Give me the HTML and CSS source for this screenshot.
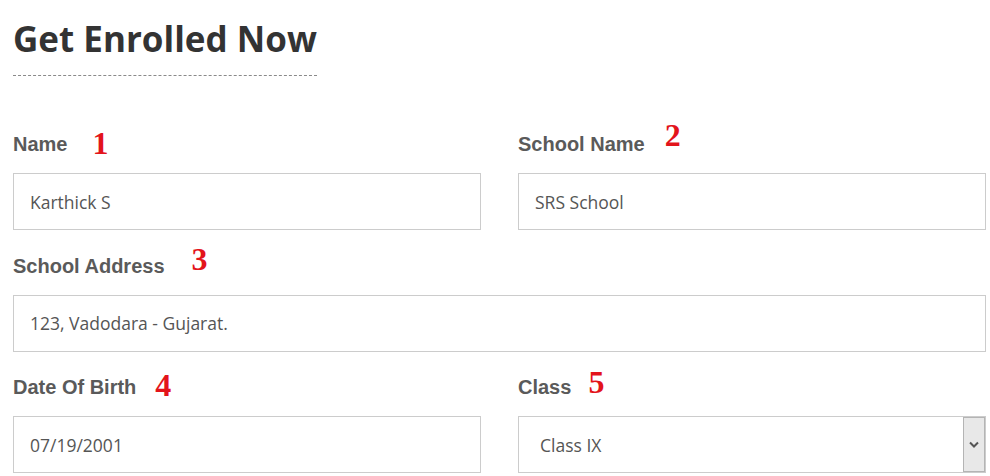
FILE: index.html
```html
<!DOCTYPE html>
<html lang="en">
<head>
<meta charset="utf-8">
<title>Get Enrolled Now</title>
<link rel="stylesheet" href="styles.css">
</head>
<body>
<div class="page">
  <h2 class="title">Get Enrolled Now</h2>
  <form class="form">
    <div class="field">
      <label class="label">Name<span class="num n1">1</span></label>
      <input class="input" type="text" value="Karthick S">
    </div>
    <div class="field">
      <label class="label">School Name<span class="num n2">2</span></label>
      <input class="input" type="text" value="SRS School">
    </div>
    <div class="field wide">
      <label class="label">School Address<span class="num n3">3</span></label>
      <input class="input" type="text" value="123, Vadodara - Gujarat.">
    </div>
    <div class="field">
      <label class="label">Date Of Birth<span class="num n4">4</span></label>
      <input class="input" type="text" value="07/19/2001">
    </div>
    <div class="field">
      <label class="label">Class<span class="num n5">5</span></label>
      <div class="select">
        <select class="select-box">
          <option>Class IX</option>
        </select>
        <span class="select-arrow">
          <svg width="10" height="7" viewBox="0 0 10 7"><path d="M1 1.5 L5 5.5 L9 1.5" fill="none" stroke="#555" stroke-width="2"/></svg>
        </span>
      </div>
    </div>
  </form>
</div>
</body>
</html>
```

FILE: styles.css
```css
html, body {
  margin: 0;
  padding: 0;
  background: #fff;
}
.page {
  padding: 0 4px 0 13px;
}
.title {
  display: inline-block;
  margin: 15px 0 0 0;
  padding-bottom: 12px;
  border-bottom: 1px dashed #8a8a8a;
  font-family: "Open Sans", sans-serif;
  font-weight: 700;
  font-size: 35px;
  line-height: 48px;
  color: #333;
}
.form {
  display: grid;
  grid-template-columns: 1fr 1fr;
  column-gap: 37px;
  margin-top: 56px;
}
.field.wide {
  grid-column: 1 / 3;
}
.label {
  display: block;
  height: 24px;
  line-height: 24px;
  font-family: "Liberation Sans", Arial, sans-serif;
  font-weight: 700;
  font-size: 20px;
  color: #5a5a5a;
  margin-bottom: 17px;
}
.num {
  font-family: "Liberation Serif", "Times New Roman", serif;
  font-weight: 700;
  font-size: 32px;
  line-height: 0;
  color: #e3141b;
}
.n1 { margin-left: 25px; vertical-align: -3px; }
.n2 { margin-left: 20px; vertical-align: 5px; }
.n3 { margin-left: 27px; vertical-align: 3px; }
.n4 { margin-left: 19px; vertical-align: -2px; }
.n5 { margin-left: 17px; vertical-align: 1px; }
.input {
  display: block;
  box-sizing: border-box;
  width: 100%;
  height: 57px;
  margin: 0 0 23.5px 0;
  padding: 0 16px;
  border: 1px solid #ccc;
  border-radius: 0;
  background: #fff;
  font-family: "Open Sans", sans-serif;
  font-size: 17.5px;
  color: #555;
  outline: none;
}
.select {
  display: flex;
  box-sizing: border-box;
  height: 57px;
  border: 1px solid #ccc;
  background: #fff;
}
.select-box {
  flex: 1;
  appearance: none;
  -webkit-appearance: none;
  border: 0;
  margin: 0;
  padding: 0 0 0 21px;
  background: #fff;
  font-family: "Open Sans", sans-serif;
  font-size: 17.5px;
  color: #555;
  outline: none;
}
.select-arrow {
  display: flex;
  align-items: center;
  justify-content: center;
  box-sizing: border-box;
  width: 22px;
  border: 1px solid #b4b4b4;
  background: #e8e8e8;
}
```
